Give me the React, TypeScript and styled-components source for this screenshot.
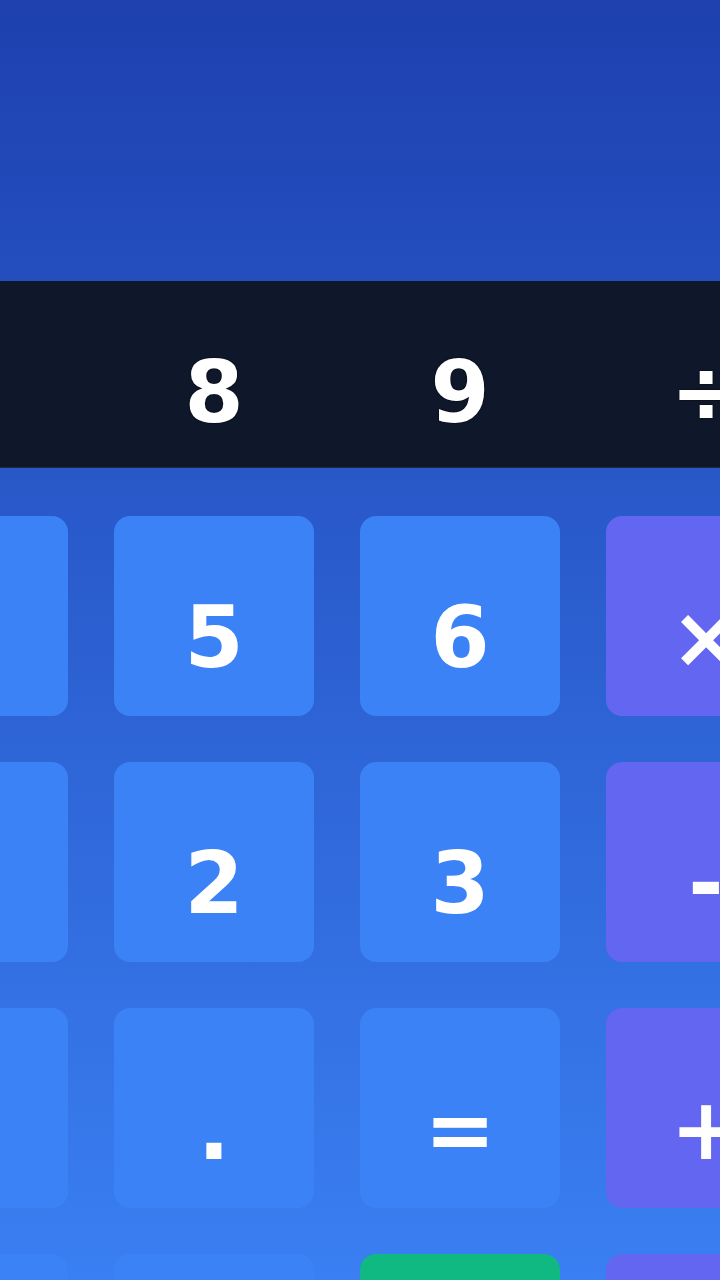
import React from "react";
import styled, { createGlobalStyle } from "styled-components";

const Global = createGlobalStyle`
  html, body { margin: 0; padding: 0; overflow: hidden; }
  body { font-family: "DejaVu Sans", "Liberation Sans", sans-serif; }
`;

const Page = styled.div`
  width: 720px;
  height: 1280px;
  overflow: hidden;
  background: linear-gradient(180deg, #1e40af 0px, #3b82f6 1340px);
  display: flex;
  flex-direction: column;
`;

const Top = styled.div`
  height: 281px;
  flex: none;
`;

const Display = styled.div`
  flex: none;
  height: 187px;
  background: #0f172a;
  border-bottom: 1px solid #1e293b;
  box-sizing: border-box;
  margin-bottom: 48px;
  overflow: hidden;
`;

const Row = styled.div`
  display: grid;
  grid-template-columns: repeat(4, 200px);
  grid-template-rows: 186px;
  column-gap: 46px;
  margin-left: -132px;
  width: 938px;
`;

const DisplayKey = styled.div`
  display: flex;
  align-items: center;
  justify-content: center;
  padding-top: 36px;
  box-sizing: border-box;
  color: #ffffff;
  font-weight: 700;
  font-size: 85px;
  text-shadow: 0 0 2px rgba(0, 0, 0, 0.9);
`;

const Pad = styled.div`
  flex: none;
  margin-left: -132px;
  width: 938px;
  display: grid;
  grid-template-columns: repeat(4, 200px);
  grid-auto-rows: 200px;
  gap: 46px;
`;

type Kind = "num" | "op" | "eq";

const colors: Record<Kind, string> = {
  num: "#3b82f6",
  op: "#6366f1",
  eq: "#10b981",
};

const Key = styled.div<{ $kind: Kind }>`
  background: ${(p) => colors[p.$kind]};
  border-radius: 16px;
  display: flex;
  align-items: center;
  justify-content: center;
  padding-top: 43px;
  box-sizing: border-box;
  color: #ffffff;
  font-weight: 700;
  font-size: 85px;
`;

const topRow = ["7", "8", "9", "÷"];

const keys: { label: string; kind: Kind }[] = [
  { label: "4", kind: "num" },
  { label: "5", kind: "num" },
  { label: "6", kind: "num" },
  { label: "×", kind: "op" },
  { label: "1", kind: "num" },
  { label: "2", kind: "num" },
  { label: "3", kind: "num" },
  { label: "-", kind: "op" },
  { label: "0", kind: "num" },
  { label: ".", kind: "num" },
  { label: "=", kind: "num" },
  { label: "+", kind: "op" },
  { label: "", kind: "num" },
  { label: "", kind: "num" },
  { label: "", kind: "eq" },
  { label: "", kind: "op" },
];

export default function App() {
  return (
    <>
      <Global />
      <Page>
        <Top />
        <Display>
          <Row>
            {topRow.map((t) => (
              <DisplayKey key={t}>{t}</DisplayKey>
            ))}
          </Row>
        </Display>
        <Pad>
          {keys.map((k, i) => (
            <Key key={i} $kind={k.kind}>
              {k.label}
            </Key>
          ))}
        </Pad>
      </Page>
    </>
  );
}
